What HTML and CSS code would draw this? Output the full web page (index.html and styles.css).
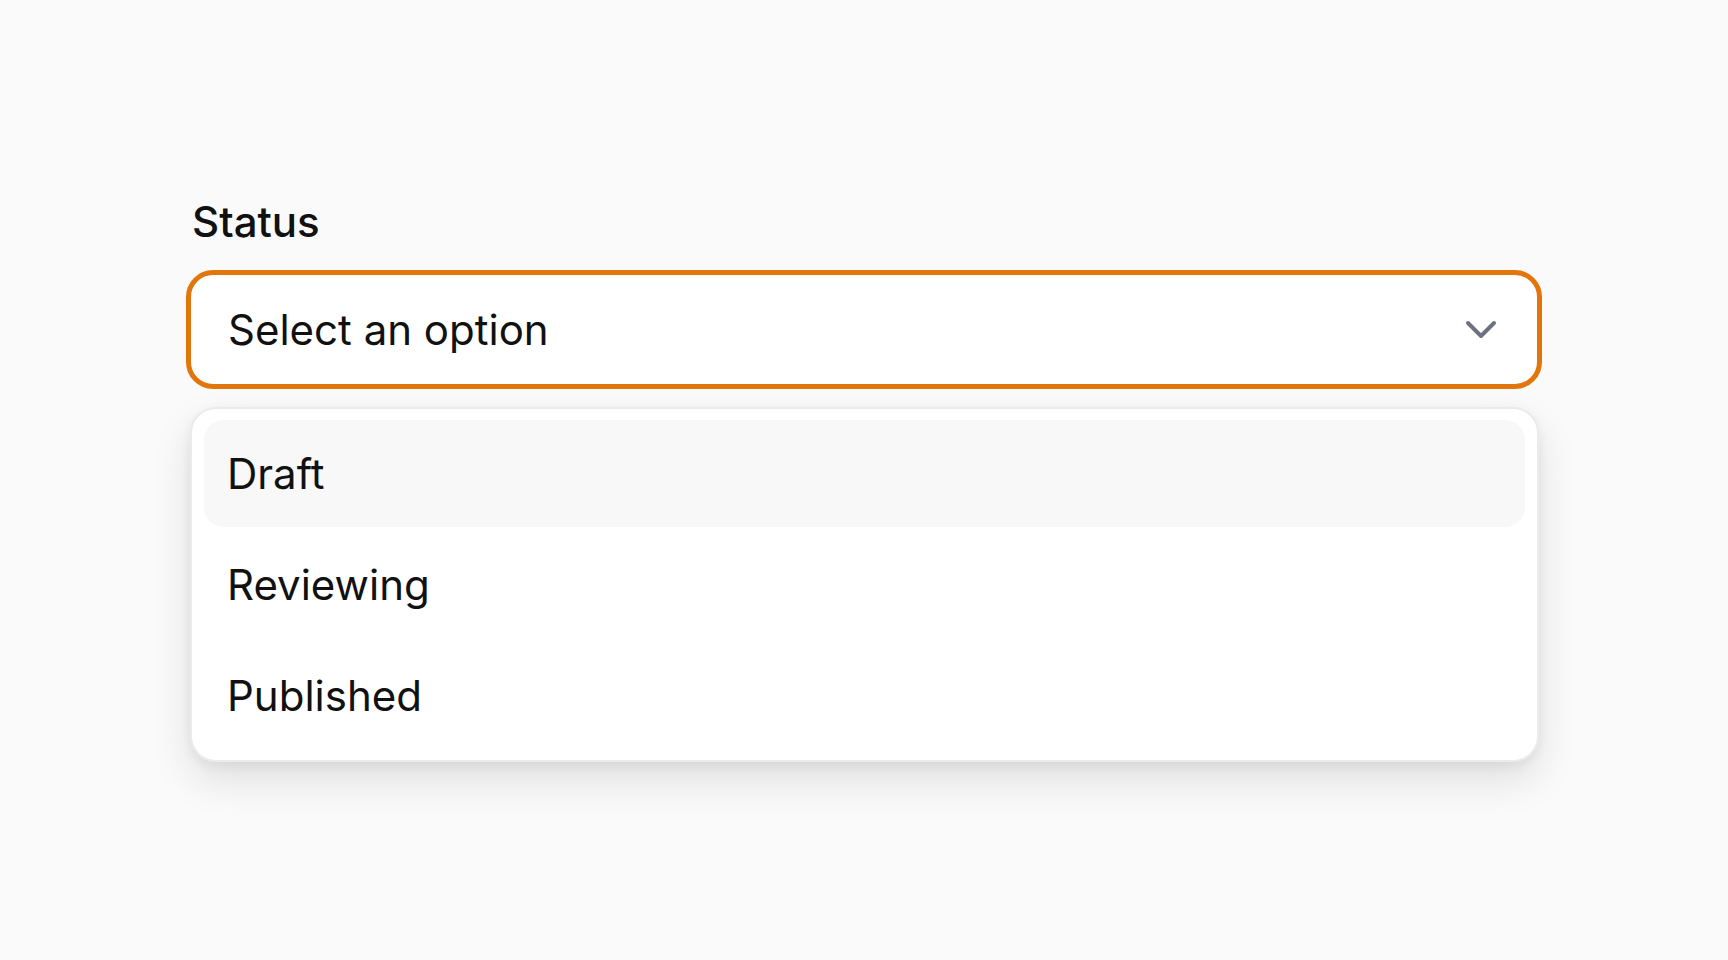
FILE: index.html
```html
<!DOCTYPE html>
<html lang="en">
<head>
<meta charset="utf-8">
<title>Status select</title>
<link rel="stylesheet" href="styles.css">
</head>
<body>
<main class="page">
  <div class="field">
    <label class="label">Status</label>
    <div class="select">
      <span class="select-text">Select an option</span>
      <svg class="chevron" width="32" height="20" viewBox="0 0 32 20" aria-hidden="true">
        <path d="M3 3 L16 16 L29 3" fill="none" stroke="#6b7280" stroke-width="4" stroke-linecap="round" stroke-linejoin="round"/>
      </svg>
    </div>
    <ul class="menu">
      <li class="option active">Draft</li>
      <li class="option">Reviewing</li>
      <li class="option">Published</li>
    </ul>
  </div>
</main>
</body>
</html>
```
FILE: styles.css
```css
* { box-sizing: border-box; }
html, body {
  margin: 0;
  padding: 0;
  background: #fafafa;
  font-family: Inter, "Noto Sans", "Liberation Sans", sans-serif;
  color: #111111;
}
.page {
  min-height: 960px;
  padding-top: 196px;
  padding-bottom: 120px;
}
.field {
  width: 1356px;
  margin: 0 auto;
  display: flex;
  flex-direction: column;
}
.label {
  font-size: 42px;
  font-weight: 500;
  line-height: 51px;
  margin-left: 6px;
  letter-spacing: 0;
}
.select {
  margin-top: 23px;
  height: 119px;
  border: 5px solid #e2760a;
  border-radius: 27px;
  background: #ffffff;
  display: flex;
  align-items: center;
  justify-content: space-between;
  padding: 0 40px 0 37px;
}
.select-text {
  font-size: 42px;
  line-height: 51px;
}
.chevron {
  display: block;
}
.menu {
  list-style: none;
  margin: 18px 3px 0 4px;
  padding: 11px 12px;
  background: #ffffff;
  border: 2px solid #ebebeb;
  border-radius: 26px;
  box-shadow: 0 18px 40px rgba(0, 0, 0, 0.11), 0 4px 12px rgba(0, 0, 0, 0.06);
  display: flex;
  flex-direction: column;
  gap: 4px;
}
.option {
  height: 107px;
  display: flex;
  align-items: center;
  padding-left: 23px;
  font-size: 42px;
  line-height: 51px;
  border-radius: 20px;
}
.option.active {
  background: #f8f8f8;
}
```
